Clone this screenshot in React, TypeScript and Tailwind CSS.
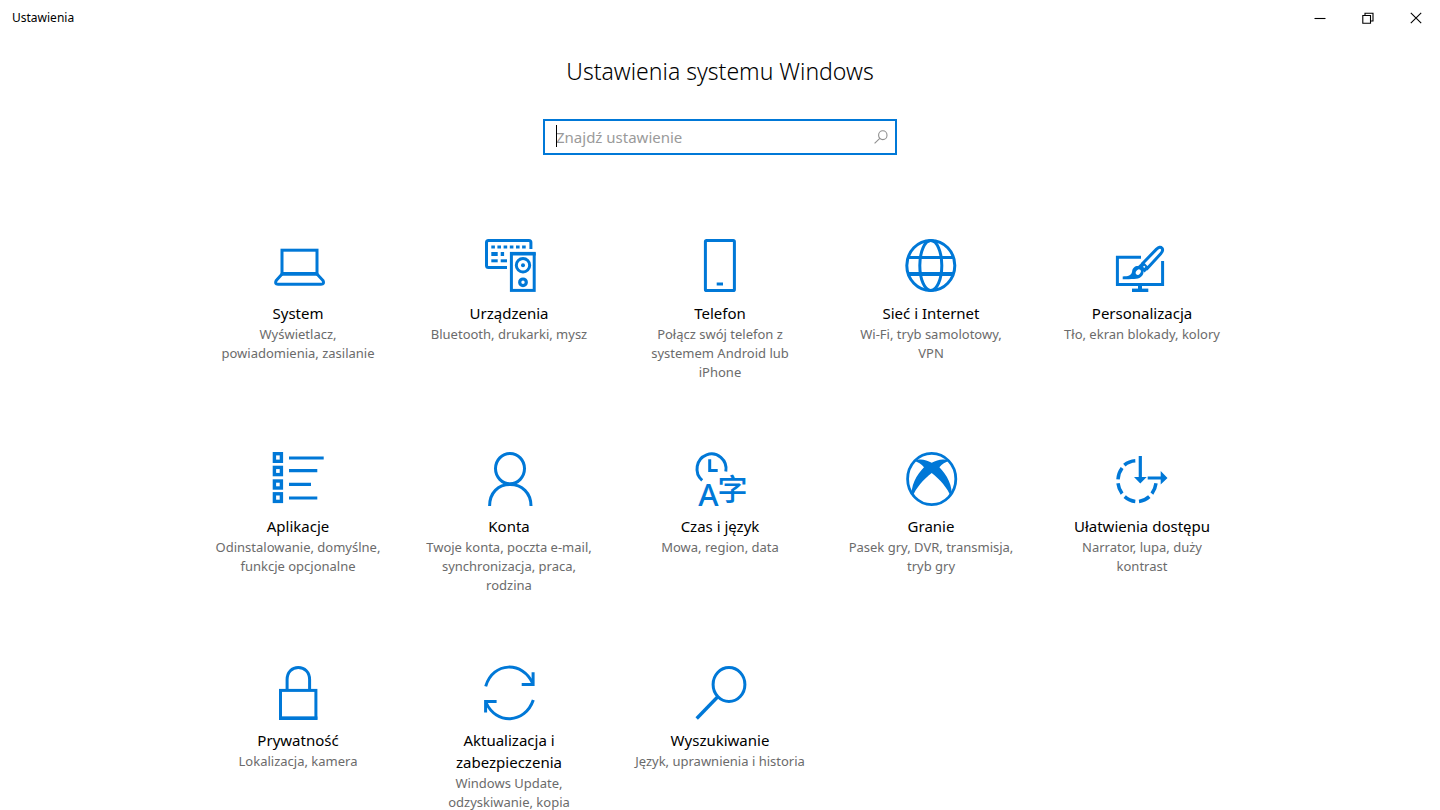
import type { ReactNode } from "react";

type Category = {
  title: string[];
  description: string[];
  icon: ReactNode;
};

const categories: Category[] = [
  {
    title: ["System"],
    description: ["Wyświetlacz,", "powiadomienia, zasilanie"],
    icon: (
      <>
        <rect x="12" y="12.2" width="35" height="23.3" />
        <path d="M12.5 35.5 L6.2 42.5 Q4.4 46.3 8 46.3 H51 Q54.8 46.3 53 42.5 L46.5 35.5" />
        <path d="M11 36.2 H48" />
      </>
    ),
  },
  {
    title: ["Urządzenia"],
    description: ["Bluetooth, drukarki, mysz"],
    icon: (
      <>
        <path d="M49.9 11 V4.5 Q49.9 2.5 47.9 2.5 H7.5 Q5.5 2.5 5.5 4.5 V27.5 Q5.5 29.5 7.5 29.5 H26" />
        <g fill="currentColor" stroke="none">
          <rect x="10.3" y="7.5" width="3.6" height="3" />
          <rect x="16.4" y="7.5" width="3.6" height="3" />
          <rect x="22.6" y="7.5" width="3.6" height="3" />
          <rect x="28.8" y="7.5" width="3.6" height="3" />
          <rect x="35" y="7.5" width="3.6" height="3" />
          <rect x="41.1" y="7.5" width="3.6" height="3" />
          <rect x="10.3" y="14" width="6.4" height="4" />
          <rect x="19.7" y="14" width="3.4" height="4" />
          <rect x="10.3" y="21.3" width="6.4" height="3" />
          <rect x="19.7" y="21.3" width="6.3" height="3" />
          <circle cx="42" cy="27.3" r="2" />
        </g>
        <rect x="30.4" y="15.4" width="22.8" height="37" />
        <path d="M29 16 H54.7" />
        <circle cx="42" cy="27.3" r="6.7" />
        <circle cx="42" cy="44.3" r="3.3" strokeWidth="3.2" />
      </>
    ),
  },
  {
    title: ["Telefon"],
    description: ["Połącz swój telefon z", "systemem Android lub", "iPhone"],
    icon: (
      <>
        <rect x="13.4" y="2.4" width="29" height="50.2" rx="1.2" />
        <path d="M24.7 46 H31" />
      </>
    ),
  },
  {
    title: ["Sieć i Internet"],
    description: ["Wi-Fi, tryb samolotowy,", "VPN"],
    icon: (
      <>
        <ellipse cx="27.8" cy="27.5" rx="24" ry="25" />
        <ellipse cx="27.8" cy="27.5" rx="11" ry="25" />
        <path d="M5 19.5 H50.5" />
        <path d="M5 36 H50.5" strokeWidth="4" />
      </>
    ),
  },
  {
    title: ["Personalizacja"],
    description: ["Tło, ekran blokady, kolory"],
    icon: (
      <>
        <path d="M27 19.3 H3.4 V46.4 H48.6 V23" />
        <path d="M26 46.5 V52" strokeWidth="4" />
        <path d="M18 52.3 H34.3" strokeWidth="3.4" />
        <path d="M28.8 25.2 L42.5 11.2 Q46 8 48 10.2 Q49.7 12.5 46.7 15.8 L33.4 30.2 Z" />
        <path d="M28 24.5 L34.2 31 L30.5 34.5 L24.2 28 Z" fill="currentColor" stroke="none" />
        <path d="M29.6 28.2 L30.8 29.4" stroke="white" strokeWidth="1.6" />
        <path
          d="M8.7 41.2 V38.4 C14 38.4 17.6 37.5 18.1 33.5 C18.6 28.4 24 26.5 27.6 29.6 C31.4 33 29.5 39 24 40.6 C21 41.4 15 41.2 8.7 41.2 Z"
          fill="currentColor"
          stroke="none"
        />
        <ellipse cx="24.3" cy="34.2" rx="2.2" ry="3" fill="white" stroke="none" transform="rotate(38 24.3 34.2)" />
      </>
    ),
  },
  {
    title: ["Aplikacje"],
    description: ["Odinstalowanie, domyślne,", "funkcje opcjonalne"],
    icon: (
      <>
        <rect x="4.4" y="2.7" width="7" height="7.6" strokeWidth="3.4" />
        <rect x="4.4" y="16.4" width="7" height="7.2" strokeWidth="3.4" />
        <rect x="4.4" y="30" width="7" height="7" strokeWidth="3.4" />
        <rect x="4.4" y="42.8" width="7" height="7.6" strokeWidth="3.4" />
        <path d="M19 7 H53.7 M19 19.7 H47.3 M19 33.3 H41 M19 47 H47.3" strokeWidth="3.2" />
      </>
    ),
  },
  {
    title: ["Konta"],
    description: ["Twoje konta, poczta e-mail,", "synchronizacja, praca,", "rodzina"],
    icon: (
      <>
        <ellipse cx="29" cy="17.6" rx="14.5" ry="15.2" />
        <path d="M8.6 55 C8.6 42 17 33.5 29 33.5 S50 42 50 55" />
      </>
    ),
  },
  {
    title: ["Czas i język"],
    description: ["Mowa, region, data"],
    icon: (
      <>
        <path d="M10.2 29.4 A14.5 15 0 1 1 33.8 20.5" />
        <path d="M17.7 8.3 V19.5 H25.7" />
        <g
          fill="currentColor"
          stroke="none"
          textAnchor="middle"
          className="font-['Noto_Sans','Noto_Sans_CJK_TC',sans-serif] font-medium"
        >
          <text x="16.4" y="55" fontSize="31">A</text>
          <text x="40.5" y="49" fontSize="30">字</text>
        </g>
      </>
    ),
  },
  {
    title: ["Granie"],
    description: ["Pasek gry, DVR, transmisja,", "tryb gry"],
    icon: (
      <>
        <ellipse cx="28.7" cy="28" rx="24.1" ry="25.6" strokeWidth="2.8" />
        <path
          d="M11.5 10 C17 7.2 23 8.8 28.7 11.8 C34.4 8.8 40.4 7.2 45.9 10 C42.5 11 39 13.2 36.4 16.2 C43.5 23.5 50.8 35.5 48 46 C44.5 37 37 28.5 28.7 22 C20.4 28.5 12.9 37 9.4 46 C6.6 35.5 13.9 23.5 21 16.2 C18.4 13.2 14.9 11 11.5 10 Z"
          fill="currentColor"
          stroke="none"
        />
      </>
    ),
  },
  {
    title: ["Ułatwienia dostępu"],
    description: ["Narrator, lupa, duży", "kontrast"],
    icon: (
      <>
        <path
          d="M10.3 14.2 A19.3 20.5 0 0 1 21.3 9.8 M4 28.3 A19.3 20.5 0 0 1 8.1 17 M4 32.3 A19.3 20.5 0 0 0 8.1 42.6 M10.7 45.6 A19.3 20.5 0 0 0 21.3 50.4 M25 50.4 A19.3 20.5 0 0 0 35.3 45.6 M37.9 42.6 A19.3 20.5 0 0 0 42 32.3"
          strokeWidth="3.5"
        />
        <path d="M26.3 5 V27 M33.7 27 H47.5" strokeWidth="3.2" />
        <path d="M20 26 H32.7 L26.3 32.5 Z M46.7 20 V33.5 L53.5 27 Z" fill="currentColor" stroke="none" />
      </>
    ),
  },
  {
    title: ["Prywatność"],
    description: ["Lokalizacja, kamera"],
    icon: (
      <>
        <rect x="10.5" y="25.4" width="35.4" height="27.8" />
        <path d="M9 53.3 H47.4" strokeWidth="3.4" />
        <path d="M17.1 25 V14.5 C17.1 7 22 2.5 28.3 2.5 S39.6 7 39.6 14.5 V25" />
      </>
    ),
  },
  {
    title: ["Aktualizacja i", "zabezpieczenia"],
    description: ["Windows Update,", "odzyskiwanie, kopia"],
    icon: (
      <>
        <path d="M4.7 21.3 C12 -3.6 42 -4 51.8 18.5" />
        <path d="M52.1 7.3 V19.4 H40.7" />
        <path d="M5 37.5 C15 60 44 59 52.3 35" />
        <path d="M4.6 47.5 V36.6 H15.6" />
      </>
    ),
  },
  {
    title: ["Wyszukiwanie"],
    description: ["Język, uprawnienia i historia"],
    icon: (
      <>
        <ellipse cx="37" cy="19.5" rx="15.9" ry="17" />
        <path d="M26 31.5 L4.7 53.5" strokeWidth="3.4" />
      </>
    ),
  },
];

function CategoryTile({ title, description, icon }: Category) {
  return (
    <li>
      <a href="#" className="flex flex-col items-center text-center whitespace-nowrap">
        <svg
          viewBox="0 0 56 56"
          fill="none"
          stroke="currentColor"
          strokeWidth="3"
          aria-hidden="true"
          className="mb-2 size-14 overflow-visible text-[#0078d7]"
        >
          {icon}
        </svg>
        <h2 className="text-[15px] leading-[22px] text-black">
          {title.map((line) => (
            <span key={line} className="block">{line}</span>
          ))}
        </h2>
        <p className="pt-px text-[13px] leading-[19px] text-[#6b6b6b]">
          {description.map((line) => (
            <span key={line} className="block">{line}</span>
          ))}
        </p>
      </a>
    </li>
  );
}

function WindowButton({ label, children }: { label: string; children: ReactNode }) {
  return (
    <button type="button" aria-label={label} className="flex h-9 w-12 items-center justify-center">
      <svg viewBox="0 0 12 12" fill="none" stroke="currentColor" strokeWidth="1.1" className="size-3">
        {children}
      </svg>
    </button>
  );
}

export default function App() {
  return (
    <div className="min-h-screen bg-white font-['Noto_Sans',sans-serif] text-black">
      <header className="flex h-9 items-center justify-between pl-3">
        <span className="text-[12px] leading-4">Ustawienia</span>
        <div className="flex">
          <WindowButton label="Minimalizuj">
            <path d="M0.5 6.5 H11.5" />
          </WindowButton>
          <WindowButton label="Przywróć w dół">
            <path d="M0.8 3.5 H8.5 V11.2 H0.8 Z M3 3.5 V1.3 H11 V9 H8.5" />
          </WindowButton>
          <WindowButton label="Zamknij">
            <path d="M0.8 0.8 L11.2 11.2 M11.2 0.8 L0.8 11.2" />
          </WindowButton>
        </div>
      </header>

      <main className="flex flex-col items-center pt-[19px]">
        <h1 className="text-[23px] leading-8 font-light">Ustawienia systemu Windows</h1>

        <label className="relative mt-8 flex h-9 w-[354px] items-center border-2 border-[#0078d7] pr-[7px] pl-[11px]">
          <input
            type="text"
            aria-label="Znajdź ustawienie"
            placeholder="Znajdź ustawienie"
            className="min-w-0 flex-1 text-[15px] leading-6 outline-none placeholder:text-[#9a9a9a]"
          />
          <span className="absolute top-1 left-[11px] h-[22px] w-px bg-black" />
          <svg viewBox="0 0 14 14" fill="none" stroke="#8f8f8f" strokeWidth="1.1" aria-hidden="true" className="size-3.5">
            <ellipse cx="8.8" cy="5.2" rx="4.2" ry="4.4" />
            <path d="M5.8 8.4 L0.6 13.4" />
          </svg>
        </label>

        <ul className="mt-[83px] grid grid-cols-[repeat(5,211px)] grid-rows-[213px_214px_auto]">
          {categories.map((category) => (
            <CategoryTile key={category.title[0]} {...category} />
          ))}
        </ul>
      </main>
    </div>
  );
}
